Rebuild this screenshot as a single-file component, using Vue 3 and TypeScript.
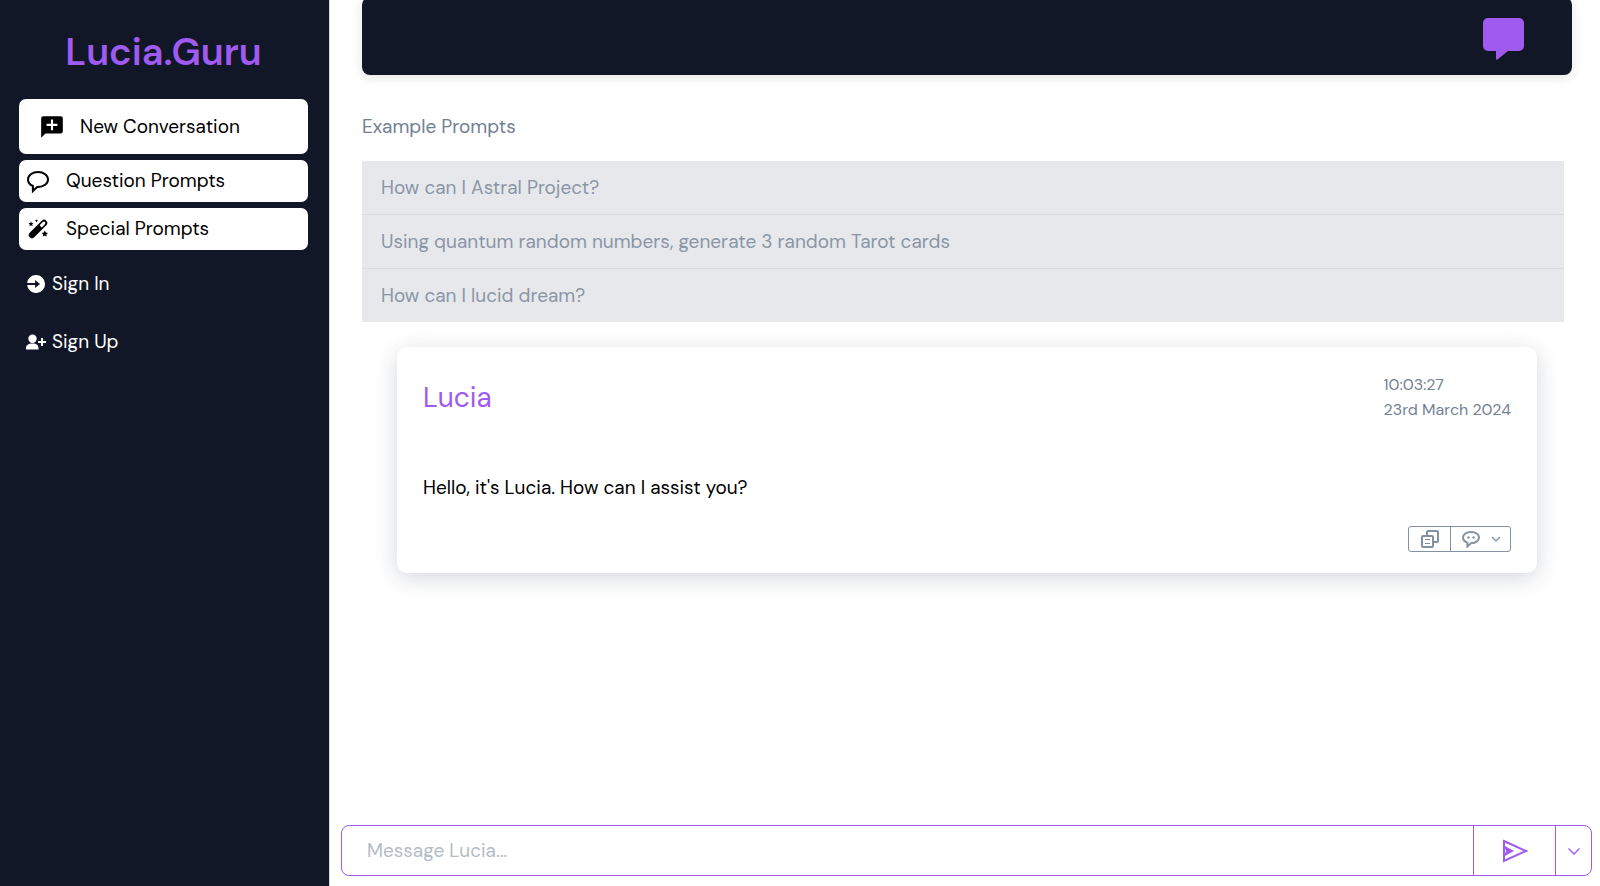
<script setup lang="ts">
import { ref } from 'vue'

const prompts: string[] = [
  'How can I Astral Project?',
  'Using quantum random numbers, generate 3 random Tarot cards',
  'How can I lucid dream?',
]
const draft = ref('')

function usePrompt(text: string) {
  draft.value = text
}
</script>

<template>
  <div class="shell">
    <aside class="sidebar">
      <h1 class="brand">Lucia.Guru</h1>
      <nav class="menu" aria-label="Main">
        <button type="button" class="item item-new">
          <svg class="icon-lg" viewBox="0 0 24 24" aria-hidden="true">
            <path fill="currentColor" fill-rule="evenodd" d="M4 2h16a2 2 0 0 1 2 2v12a2 2 0 0 1-2 2H6l-4 4V4a2 2 0 0 1 2-2zm13 9V9h-4V5h-2v4H7v2h4v4h2v-4z" />
          </svg>
          New Conversation
        </button>
        <button type="button" class="item">
          <svg class="icon-md" viewBox="0 0 24 24" aria-hidden="true">
            <path fill="none" stroke="currentColor" stroke-width="2" stroke-linejoin="miter" d="M12 3C6.200 3 2 6.400 2 10.500c0 2.900 1.900 5.300 4.900 6.500v5c1.700-1.800 2.900-2.800 4.300-4H12c5.800 0 10-3.400 10-7.500S17.800 3 12 3z" />
          </svg>
          Question Prompts
        </button>
        <button type="button" class="item">
          <svg class="icon-md" viewBox="0 0 24 24" aria-hidden="true">
            <path fill="currentColor" fill-rule="evenodd" d="M3.700 15.800 15.800 3.700a3.200 3.200 0 0 1 4.500 0 3.200 3.200 0 0 1 0 4.500L8.200 20.300a3.200 3.200 0 0 1-4.500 0 3.200 3.200 0 0 1 0-4.500zM13.600 8.300l2.100 2.100 3.200-3.200a1.400 1.400 0 0 0-2.100-2.100z" />
            <path fill="currentColor" d="m5 4.200.7 1.700 1.900.2-1.400 1.200.4 1.900L5 8.200l-1.600 1 .4-1.900-1.400-1.200 1.900-.2zM10.500 2.200l.5 1.100 1.200.5-1.200.5-.5 1.100-.5-1.100-1.200-.5 1.200-.5zM18.800 13.600l1 2 2.200.3-1.600 1.500.4 2.200-2-1-2 1 .4-2.200-1.600-1.500 2.200-.3z" />
          </svg>
          Special Prompts
        </button>
      </nav>
      <nav class="account" aria-label="Account">
        <a href="#sign-in" class="link">
          <svg class="icon-sm" viewBox="0 0 20 20" aria-hidden="true">
            <path fill="currentColor" fill-rule="evenodd" d="M10 1a9 9 0 1 1-8.900 10h8v3L14 10 9.100 6v3h-8A9 9 0 0 1 10 1z" />
          </svg>
          Sign In
        </a>
        <a href="#sign-up" class="link">
          <svg class="icon-sm" viewBox="0 0 20 20" aria-hidden="true">
            <circle cx="6.500" cy="6.800" r="4.200" fill="currentColor" />
            <path fill="currentColor" d="M0 17.500V16c0-3 2.300-4.500 6.500-4.500S12.500 13 12.500 16v1.500z" />
            <path stroke="currentColor" stroke-width="2" d="M12 10h8M16 6v8" />
          </svg>
          Sign Up
        </a>
      </nav>
    </aside>

    <main class="main">
      <div class="content">
        <header class="topbar">
          <button type="button" class="chat-toggle" aria-label="Chat">
            <svg viewBox="0 0 42 42" aria-hidden="true">
              <path fill="currentColor" d="M5 0h31a5 5 0 0 1 5 5v23a5 5 0 0 1-5 5H25l-10 8a1 1 0 0 1-2-1v-7H5a5 5 0 0 1-5-5V5a5 5 0 0 1 5-5z" />
            </svg>
          </button>
        </header>
        <h2 class="heading">Example Prompts</h2>
        <ul class="prompts">
          <li v-for="prompt in prompts" :key="prompt">
            <button type="button" class="prompt" @click="usePrompt(prompt)">{{ prompt }}</button>
          </li>
        </ul>
        <article class="card">
          <div class="card-head">
            <h3 class="author">Lucia</h3>
            <time class="stamp" datetime="2024-03-23T10:03:27">
              <span>10:03:27</span>
              <span>23rd March 2024</span>
            </time>
          </div>
          <p class="message">Hello, it's Lucia. How can I assist you?</p>
          <div class="actions">
            <button type="button" class="action" aria-label="Copy">
              <svg width="18" height="18" viewBox="0 0 18 18" aria-hidden="true">
                <g fill="none" stroke="currentColor" stroke-width="2" stroke-linejoin="round">
                  <path d="M6 6V2a1 1 0 0 1 1-1h9a1 1 0 0 1 1 1v9a1 1 0 0 1-1 1h-4" />
                  <rect x="1" y="6" width="11" height="11" rx="1" />
                </g>
                <path stroke="currentColor" stroke-width="1" d="M4 9.500h5M4 13.500h5" />
              </svg>
            </button>
            <button type="button" class="action action-wide" aria-label="Response options">
              <svg width="18" height="18" viewBox="0 0 18 18" aria-hidden="true">
                <path fill="none" stroke="currentColor" stroke-width="2" d="M9 2C4.600 2 1 4.200 1 7.600c0 2.200 1.600 4.100 4.400 5V16.500c1.400-1.500 2.400-2.400 3.600-3.300 4.400 0 8-2.200 8-5.600S13.400 2 9 2z" />
                <circle cx="6.500" cy="7.500" r="1.200" fill="currentColor" />
                <circle cx="11.500" cy="7.500" r="1.200" fill="currentColor" />
              </svg>
              <svg width="10" height="10" viewBox="0 0 10 10" aria-hidden="true">
                <path fill="none" stroke="currentColor" stroke-width="1.300" d="m1 3 4 4 4-4" />
              </svg>
            </button>
          </div>
        </article>
      </div>

      <form class="composer" @submit.prevent="draft = ''">
        <input v-model="draft" class="field" type="text" placeholder="Message Lucia..." aria-label="Message Lucia" />
        <button type="submit" class="send" aria-label="Send">
          <svg width="26" height="26" viewBox="0 0 26 26" aria-hidden="true">
            <path fill="none" stroke="currentColor" stroke-width="2" stroke-linejoin="miter" d="M2 3l22 10L2 23V3z" />
            <path fill="currentColor" d="M2 7.500 12 13 2 18.500 4 13z" />
          </svg>
        </button>
        <button type="button" class="more" aria-label="More send options">
          <svg width="14" height="14" viewBox="0 0 14 14" aria-hidden="true">
            <path fill="none" stroke="currentColor" stroke-width="1.300" d="m1.500 4.500 5.500 5.500 5.500-5.500" />
          </svg>
        </button>
      </form>
    </main>
  </div>
</template>

<style>
body {
  margin: 0;
  background: #fff;
}
</style>

<style scoped>
.shell {
  --navy: #111726;
  --purple: #9f5af0;
  --slate: #728094;
  display: flex;
  min-height: 100vh;
  font-family: "DM Sans", Inter, "Open Sans", sans-serif;
  font-size: 19px;
  line-height: 28px;
  color: #000;
}
button,
input {
  margin: 0;
  font: inherit;
  color: inherit;
}
button {
  padding: 0;
  border: 0;
  background: none;
  cursor: pointer;
}
svg {
  display: block;
  flex: none;
}
.sidebar {
  box-sizing: border-box;
  flex: 0 0 330px;
  padding: 28px 21px 0 19px;
  border-right: 1px solid #d9dbe0;
  background: var(--navy);
}
.brand {
  margin: 0 0 23px;
  font-size: 38px;
  line-height: 48px;
  font-weight: 600;
  text-align: center;
  color: var(--purple);
}
.menu {
  display: flex;
  flex-direction: column;
  gap: 6px;
}
.item {
  display: flex;
  align-items: center;
  gap: 16px;
  padding: 7px;
  border-radius: 7px;
  background: #fff;
  text-align: left;
}
.item-new {
  gap: 15px;
  padding: 14px 20px 13px;
}
.icon-lg {
  width: 26px;
  height: 26px;
}
.icon-md {
  width: 24px;
  height: 24px;
}
.icon-sm {
  width: 20px;
  height: 20px;
}
.account {
  display: flex;
  flex-direction: column;
  gap: 30px;
  padding: 20px 7px;
}
.link {
  display: flex;
  align-items: center;
  gap: 6px;
  color: #fff;
  text-decoration: none;
}
.main {
  display: flex;
  flex: 1;
  flex-direction: column;
  min-width: 0;
}
.content {
  flex: 1;
  padding: 0 28px 0 32px;
}
.topbar {
  display: flex;
  justify-content: flex-end;
  margin-top: -3px;
  padding: 21px 47px 15px;
  border-radius: 8px;
  background: var(--navy);
  box-shadow: 0 2px 12px rgba(17, 24, 38, 0.12);
}
.chat-toggle {
  width: 42px;
  height: 42px;
  color: var(--purple);
}
.heading {
  margin: 38px 0 20px;
  font-size: 19px;
  font-weight: 400;
  color: var(--slate);
}
.prompts {
  margin: 0 8px 25px 0;
  padding: 0;
  list-style: none;
  background: #e7e8ec;
}
.prompts li + li {
  border-top: 1px solid #d9dbe0;
}
.prompt {
  display: block;
  width: 100%;
  padding: 13px 19px 12px;
  text-align: left;
  color: #8a96a6;
}
.card {
  margin: 0 35px 32px;
  padding: 25px 26px 21px;
  border-radius: 10px;
  background: #fff;
  box-shadow: 0 5px 22px rgba(30, 41, 70, 0.19);
}
.card-head {
  display: flex;
  align-items: center;
  justify-content: space-between;
}
.author {
  margin: 0;
  padding-top: 2px;
  font-size: 28px;
  line-height: 40px;
  font-weight: 400;
  color: var(--purple);
}
.stamp {
  display: flex;
  flex-direction: column;
  font-size: 16px;
  line-height: 25px;
  color: var(--slate);
}
.message {
  margin: 52px 0 24px;
}
.actions {
  display: flex;
  width: max-content;
  margin-left: auto;
  border: 1px solid #8491a3;
  border-radius: 3px;
  color: #8491a3;
}
.action {
  display: flex;
  align-items: center;
  height: 24px;
  padding: 0 11px 0 12px;
}
.action-wide {
  gap: 11px;
  padding: 0 9px 0 11px;
  border-left: 1px solid #8491a3;
}
.composer {
  display: flex;
  height: 49px;
  margin: 0 8px 10px 11px;
  border: 1px solid var(--purple);
  border-radius: 8px;
  background: #fff;
  color: var(--purple);
}
.field {
  flex: 1;
  min-width: 0;
  padding: 0 25px;
  border: 0;
  outline: 0;
  background: none;
  color: #000;
}
.field::placeholder {
  color: #b4bcc6;
  opacity: 1;
}
.send,
.more {
  display: grid;
  place-items: center;
  border-left: 1px solid var(--purple);
}
.send {
  width: 82px;
}
.more {
  width: 36px;
}
</style>
